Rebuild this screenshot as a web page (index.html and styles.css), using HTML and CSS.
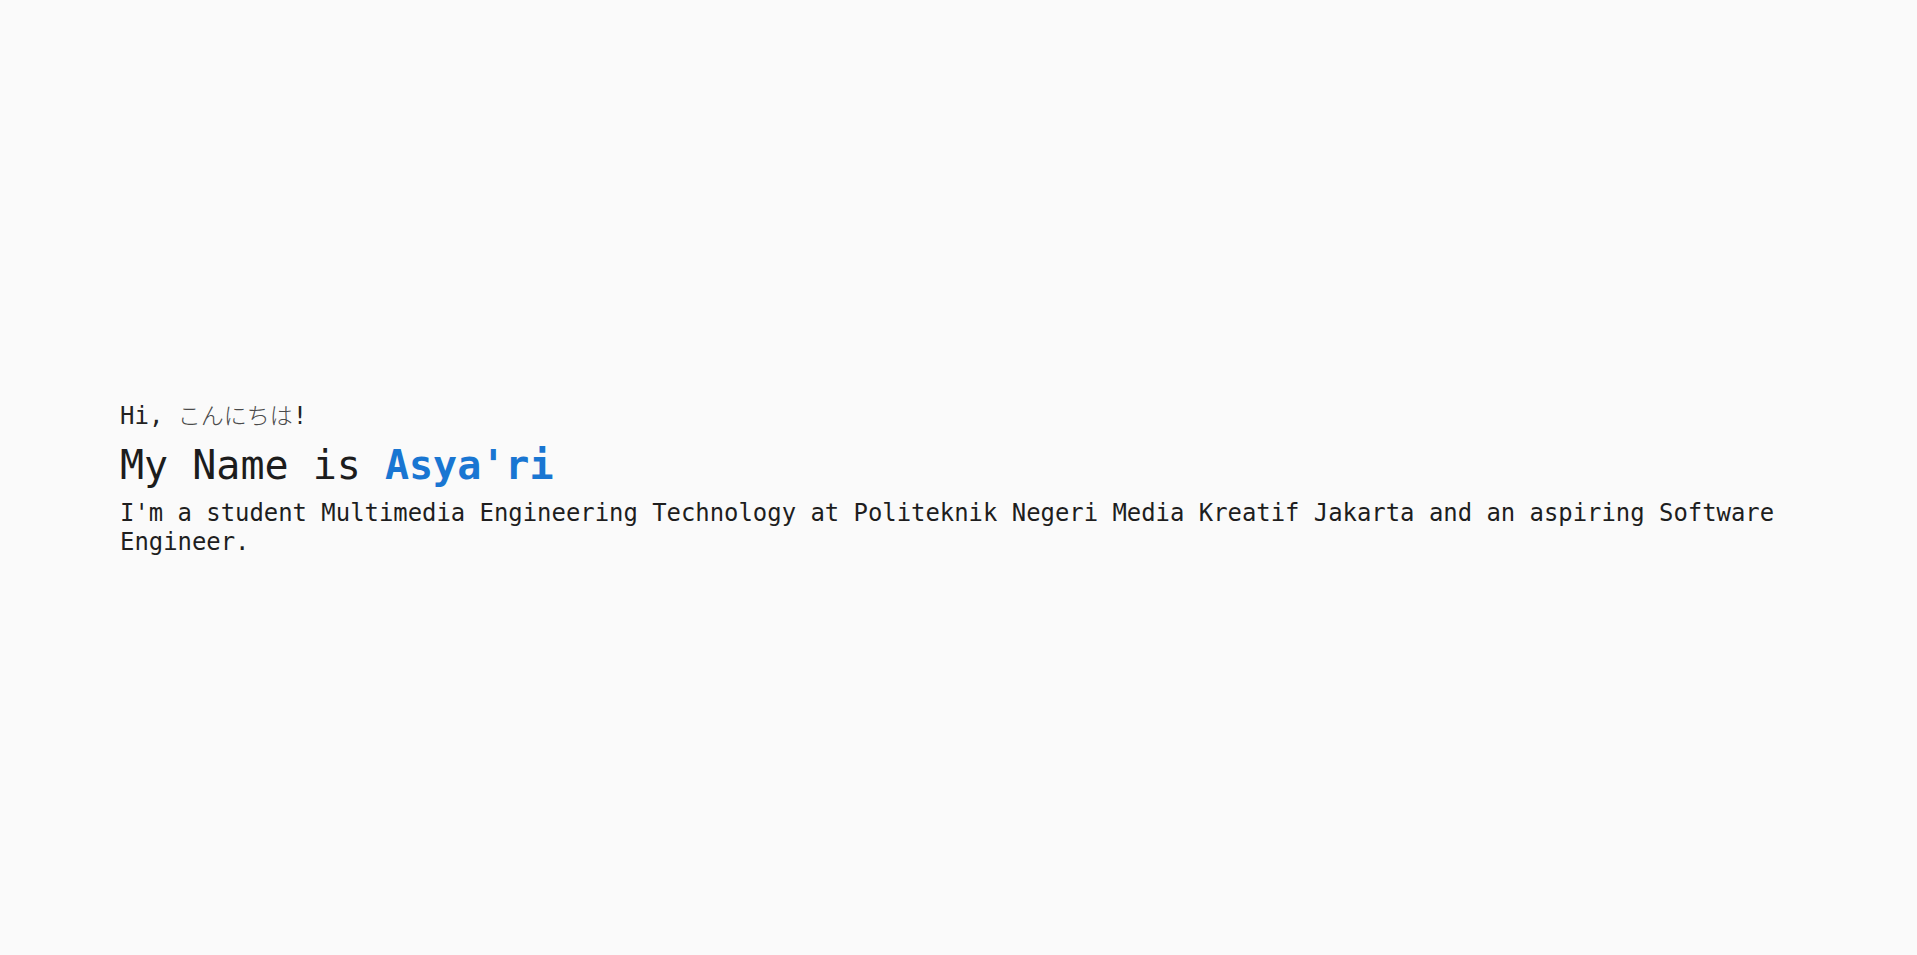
FILE: index.html
```html
<!DOCTYPE html>
<html lang="en">
<head>
<meta charset="utf-8">
<title>Asya'ri</title>
<link rel="stylesheet" href="styles.css">
</head>
<body>
<main class="page">
  <section class="hero">
    <div class="hero-inner">
      <p class="greet">Hi, <span class="jp">こんにちは</span>!</p>
      <h1 class="title">My Name is <span class="name">Asya'ri</span></h1>
      <p class="intro">I'm a student Multimedia Engineering Technology at Politeknik Negeri Media Kreatif Jakarta and an aspiring Software Engineer.</p>
    </div>
  </section>
  <section class="rest"></section>
</main>
</body>
</html>
```

FILE: styles.css
```css
html, body {
  margin: 0;
  padding: 0;
  background: #fafafa;
}

body {
  font-family: "DejaVu Sans Mono", "Liberation Mono", "Noto Sans CJK JP", monospace;
  color: #1e1e1e;
}

::-webkit-scrollbar {
  width: 15px;
}

::-webkit-scrollbar-track {
  background: #f1f1f1;
}

::-webkit-scrollbar-thumb {
  background: #c1c1c1;
  border: 2px solid #f1f1f1;
  border-top-width: 16px;
}

.page {
  display: flex;
  flex-direction: column;
}

.hero {
  min-height: 100vh;
  display: flex;
  flex-direction: column;
  justify-content: center;
  padding: 0 120px;
  box-sizing: border-box;
}

.hero-inner {
  display: flex;
  flex-direction: column;
}

.greet {
  margin: 0;
  font-size: 24px;
  line-height: 32px;
  color: #222;
}

.jp {
  font-family: "Noto Sans CJK JP", sans-serif;
  font-weight: 300;
  color: #4a4a4a;
  font-size: 23px;
}

.title {
  margin: 9px 0 0;
  font-size: 40px;
  line-height: 48px;
  font-weight: 400;
  color: #1c1c1c;
}

.name {
  color: #1976d2;
  font-weight: 700;
}

.intro {
  margin: 10px 0 0;
  font-size: 23.9px;
  line-height: 29px;
  color: #1e1e1e;
}

.rest {
  height: 3425px;
}
```
